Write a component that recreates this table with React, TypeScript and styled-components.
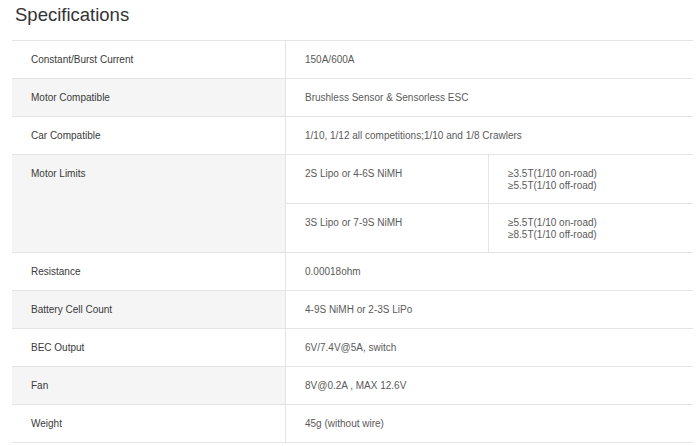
import styled, { createGlobalStyle } from "styled-components";

const GlobalStyle = createGlobalStyle`
    body {
        margin: 0;
        background: #ffffff;
        font-family: "Liberation Sans", Arial, sans-serif;
    }
`

type Limit = { battery: string; turns: string[] };

const limits: Limit[] = [
    { battery: "2S Lipo or 4-6S NiMH", turns: ["≥3.5T(1/10 on-road)", "≥5.5T(1/10 off-road)"] },
    { battery: "3S Lipo or 7-9S NiMH", turns: ["≥5.5T(1/10 on-road)", "≥8.5T(1/10 off-road)"] },
];

const specs: { label: string; value?: string }[] = [
    { label: "Constant/Burst Current", value: "150A/600A" },
    { label: "Motor Compatible", value: "Brushless Sensor & Sensorless ESC" },
    { label: "Car Compatible", value: "1/10, 1/12 all competitions;1/10 and 1/8 Crawlers" },
    { label: "Motor Limits" },
    { label: "Resistance", value: "0.00018ohm" },
    { label: "Battery Cell Count", value: "4-9S NiMH or 2-3S LiPo" },
    { label: "BEC Output", value: "6V/7.4V@5A, switch" },
    { label: "Fan", value: "8V@0.2A , MAX 12.6V" },
    { label: "Weight", value: "45g (without wire)" },
];

export default function App() {
    return (
        <Page>
            <GlobalStyle />
            <Title>Specifications</Title>
            <Table>
                <tbody>
                    {specs.map(({ label, value }, i) =>
                        <tr key={label}>
                            <Label shaded={i % 2 === 1}>{label}</Label>
                            {value !== undefined ? (
                                <Value>{value}</Value>
                            ) : (
                                <NestedCell>
                                    {limits.map(limit =>
                                        <LimitRow key={limit.battery}>
                                            <LimitBattery>{limit.battery}</LimitBattery>
                                            <LimitTurns>
                                                {limit.turns.map(t => <div key={t}>{t}</div>)}
                                            </LimitTurns>
                                        </LimitRow>
                                    )}
                                </NestedCell>
                            )}
                        </tr>
                    )}
                </tbody>
            </Table>
        </Page>
    )
}

const Page = styled.div`
    width: 681px;
    padding-left: 12px;
`

const Title = styled.h2`
    margin: 0 0 10px 3px;
    font-size: 18.5px;
    font-weight: normal;
    line-height: 30px;
    color: #333333;
`

const Table = styled.table`
    width: 100%;
    border-collapse: collapse;
    font-size: 10px;
    line-height: 12px;

    tr {
        border-top: 1px solid #e4e4e4;
        border-bottom: 1px solid #e4e4e4;
    }
`

const Label = styled.td<{ shaded: boolean }>`
    width: 235px;
    padding: 13px 19px 12px 19px;
    vertical-align: top;
    color: #3a3a3a;
    background-color: ${props => props.shaded ? "#f5f5f5" : "transparent"};
    border-right: 1px solid #e4e4e4;
`

const Value = styled.td`
    padding: 13px 19px 12px 19px;
    vertical-align: top;
    color: #5a5a5a;
`

const NestedCell = styled.td`
    padding: 0;
    vertical-align: top;
`

const LimitRow = styled.div`
    display: grid;
    grid-template-columns: 203px 1fr;
    height: 48px;
    color: #5a5a5a;

    & + & {
        border-top: 1px solid #e4e4e4;
    }
`

const LimitBattery = styled.div`
    padding: 13px 19px 0 19px;
    border-right: 1px solid #e4e4e4;
`

const LimitTurns = styled.div`
    padding: 13px 19px 0 19px;
`
